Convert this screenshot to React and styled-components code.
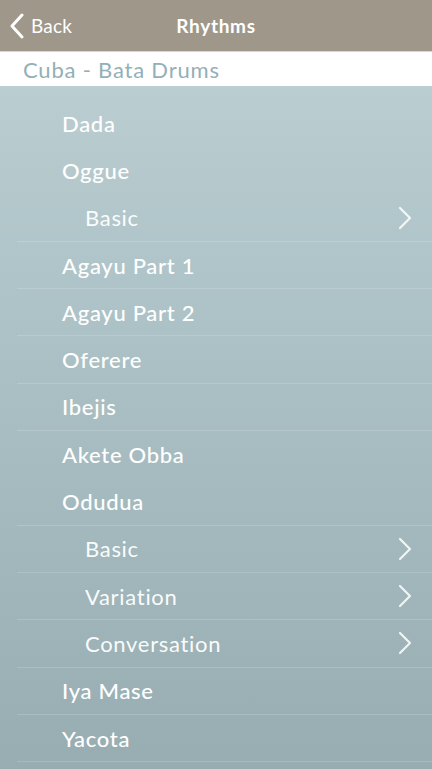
import React from 'react';
import styled, { createGlobalStyle } from 'styled-components';

const GlobalStyle = createGlobalStyle`
  html, body {
    margin: 0;
    padding: 0;
    height: 100%;
  }
  body {
    font-family: Lato, "Open Sans", sans-serif;
    -webkit-font-smoothing: antialiased;
  }
  #root {
    height: 100%;
  }
`;

const Screen = styled.div`
  width: 432px;
  height: 769px;
  display: flex;
  flex-direction: column;
  overflow: hidden;
  background: linear-gradient(180deg, #bfd1d5 0%, #abc1c5 45%, #97adb2 100%);
`;

const NavBar = styled.header`
  height: 51px;
  flex-shrink: 0;
  display: grid;
  grid-template-columns: 1fr auto 1fr;
  align-items: center;
  background: #9e978a;
  color: #fff;
  border-bottom: 1px solid #d9d6d0;
`;

const BackButton = styled.div`
  display: flex;
  align-items: center;
  gap: 6px;
  padding-left: 9px;
  font-size: 19px;
  letter-spacing: 0.2px;
`;

const Title = styled.h1`
  margin: 0;
  font-size: 19px;
  font-weight: 700;
  letter-spacing: 0.7px;
`;

const SectionHeader = styled.div`
  height: 34px;
  flex-shrink: 0;
  display: flex;
  align-items: center;
  padding-left: 23px;
  background: #fff;
  color: #93b0b8;
  font-size: 22px;
  letter-spacing: 0.8px;
`;

const List = styled.ul`
  list-style: none;
  margin: 0;
  padding: 14px 0 0;
`;

const Row = styled.li`
  height: 47.3px;
  box-sizing: border-box;
  margin-left: 17px;
  padding-left: ${p => (p.$sub ? 68 : 45)}px;
  padding-right: 20px;
  display: flex;
  align-items: center;
  justify-content: space-between;
  color: #fff;
  font-size: 22px;
  letter-spacing: 0.7px;
  border-bottom: 1px solid ${p => (p.$line ? 'rgba(255, 255, 255, 0.16)' : 'transparent')};
`;

const Label = styled.span`
  font-weight: ${p => (p.$sub ? 400 : 500)};
  opacity: ${p => (p.$sub ? 0.95 : 1)};
`;

const ChevronLeft = () => (
  <svg width="16" height="26" viewBox="0 0 16 26" fill="none">
    <path d="M13 2 L3 13 L13 24" stroke="#fff" strokeWidth="3" strokeLinecap="round" strokeLinejoin="round" />
  </svg>
);

const ChevronRight = () => (
  <svg width="14" height="24" viewBox="0 0 14 24" fill="none">
    <path d="M2 2 L12 12 L2 22" stroke="rgba(255,255,255,0.85)" strokeWidth="2.2" strokeLinecap="round" strokeLinejoin="round" />
  </svg>
);

const rhythms = [
  { name: 'Dada' },
  { name: 'Oggue' },
  { name: 'Basic', sub: true, line: true },
  { name: 'Agayu Part 1', line: true },
  { name: 'Agayu Part 2', line: true },
  { name: 'Oferere', line: true },
  { name: 'Ibejis', line: true },
  { name: 'Akete Obba' },
  { name: 'Odudua', line: true },
  { name: 'Basic', sub: true, line: true },
  { name: 'Variation', sub: true, line: true },
  { name: 'Conversation', sub: true, line: true },
  { name: 'Iya Mase', line: true },
  { name: 'Yacota', line: true },
];

const App = () => {
  return (
    <>
      <GlobalStyle />
      <Screen>
        <NavBar>
          <BackButton>
            <ChevronLeft />
            Back
          </BackButton>
          <Title>Rhythms</Title>
          <div />
        </NavBar>
        <SectionHeader>Cuba - Bata Drums</SectionHeader>
        <List>
          {rhythms.map((r, i) => (
            <Row key={i} $sub={r.sub} $line={r.line}>
              <Label $sub={r.sub}>{r.name}</Label>
              {r.sub && <ChevronRight />}
            </Row>
          ))}
        </List>
      </Screen>
    </>
  );
};

export default App;
